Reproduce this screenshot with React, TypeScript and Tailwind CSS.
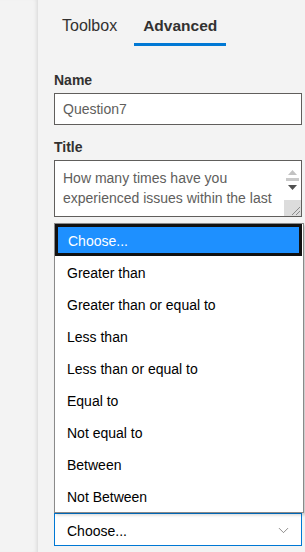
import { ChevronDown } from 'lucide-react';

const options = [
  'Choose...',
  'Greater than',
  'Greater than or equal to',
  'Less than',
  'Less than or equal to',
  'Equal to',
  'Not equal to',
  'Between',
  'Not Between',
];

function Scrollbar() {
  return (
    <div className="absolute right-0 top-0 bottom-0 w-[17px] flex flex-col bg-[#f0f0f0]">
      <div className="h-[39px] flex flex-col items-center pt-[9px] bg-white">
        <svg width="9" height="5" viewBox="0 0 9 5">
          <path d="M0 5 L4.5 0 L9 5 Z" fill="#c2c2c2" />
        </svg>
        <div className="mt-[3px] w-[13px] h-[3px] bg-[#c9c9c9]" />
        <svg className="mt-[4px]" width="9" height="5" viewBox="0 0 9 5">
          <path d="M0 0 L9 0 L4.5 5 Z" fill="#505050" />
        </svg>
      </div>
      <div className="flex-1 bg-[#dcdcdc] relative">
        <svg className="absolute right-[1px] bottom-[1px]" width="9" height="9" viewBox="0 0 9 9">
          <path d="M1 9 L9 1 M5 9 L9 5" stroke="#8a8a8a" strokeWidth="1" />
        </svg>
      </div>
    </div>
  );
}

export default function App() {
  return (
    <div
      className="w-[305px] h-[552px] flex bg-[#f3f3f3] overflow-hidden text-[#323130]"
      style={{ fontFamily: '"Segoe UI", "Liberation Sans", Lato, sans-serif' }}
    >
      <div className="w-[38px] shrink-0 bg-[#f3f3f3] shadow-[inset_-4px_0_4px_-3px_rgba(0,0,0,0.12)]" />
      <div className="flex-1 flex flex-col pl-[16px] pr-[3px]">
        <div className="flex gap-[7px] -ml-[2px]">
          <div className="px-[10px] pt-[14px] pb-[8px] text-[16px] leading-[24px] text-[#323130]">Toolbox</div>
          <div className="px-[9px] pt-[14px] pb-[5px] text-[15.5px] leading-[24px] font-semibold text-[#323130] border-b-[3px] border-[#0078d4]">
            Advanced
          </div>
        </div>

        <label className="mt-[24px] text-[14px] leading-[20px] font-semibold">Name</label>
        <div className="mt-[3px] h-[32px] border border-[#605e5c] bg-white flex items-center px-[8px] text-[14px] text-[#605e5c]">
          Question7
        </div>

        <label className="mt-[12px] text-[14px] leading-[20px] font-semibold">Title</label>
        <div className="mt-[3px] h-[57px] border border-[#605e5c] bg-white relative pl-[8px] pr-[20px] pt-[7px] text-[14px] leading-[20px] text-[#605e5c] overflow-hidden">
          <div>How many times have you</div>
          <div className="whitespace-nowrap">experienced issues within the last</div>
          <Scrollbar />
        </div>

        <div className="mt-auto mb-[6px] relative">
          <ul className="absolute left-0 -right-[2px] bottom-full bg-white border border-[#8a8a8a] shadow-[2px_2px_3px_rgba(0,0,0,0.18)] text-[14px] text-black">
            {options.map((o, i) => (
              <li
                key={o}
                className={
                  i === 0
                    ? 'h-[32px] flex items-center pl-[10px] pt-[2px] bg-[#1e90ff] text-white border-[3px] border-[#111] mr-[1px]'
                    : 'h-[32px] flex items-center pl-[12px] pt-[3px]'
                }
              >
                {o}
              </li>
            ))}
          </ul>
          <div className="h-[33px] border border-[#0078d4] bg-white flex items-center justify-between pl-[12px] pr-[9px] pt-[3px] text-[14px] text-black">
            <span>Choose...</span>
            <ChevronDown size={17} strokeWidth={1} className="text-[#605e5c] -mt-[2px]" />
          </div>
        </div>
      </div>
    </div>
  );
}
